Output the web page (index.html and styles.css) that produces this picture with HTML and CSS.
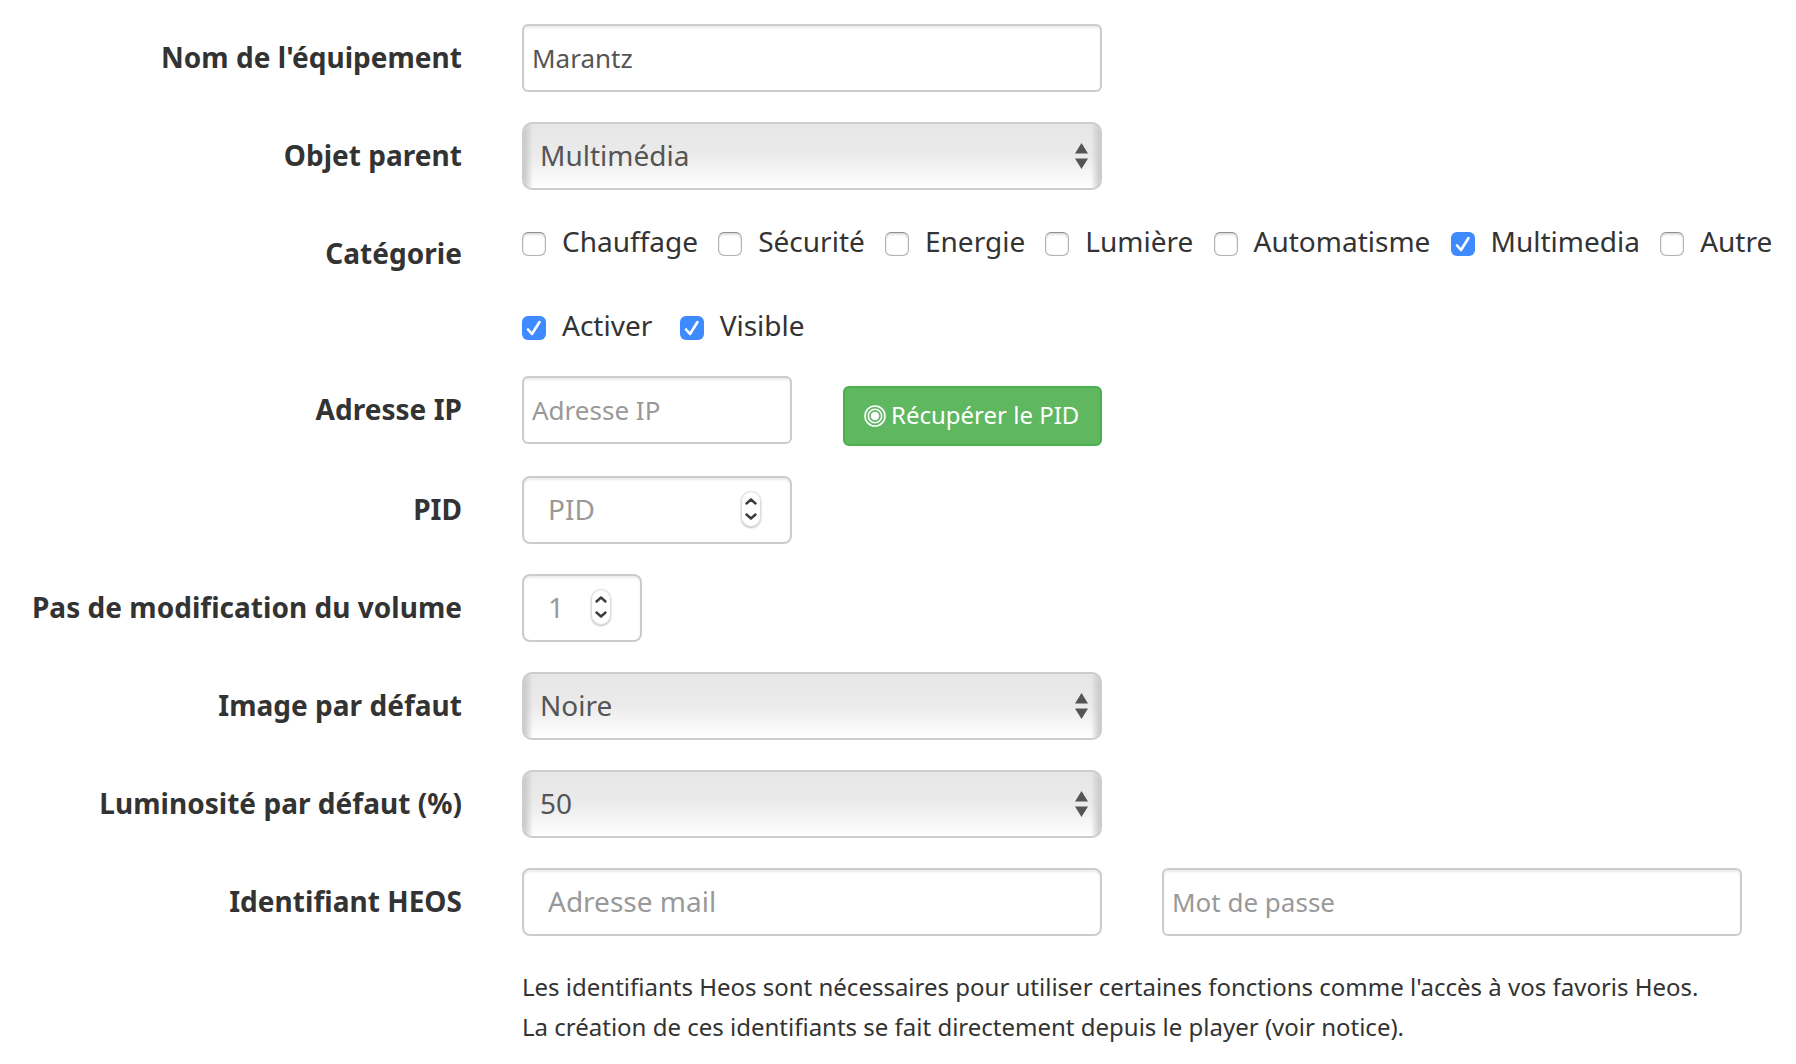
FILE: index.html
```html
<!DOCTYPE html>
<html lang="fr">
<head>
<meta charset="utf-8">
<title>Équipement</title>
<link rel="stylesheet" href="styles.css">
</head>
<body>
<form class="form">
  <div class="row">
    <label class="label">Nom de l'équipement</label>
    <input class="control wide compact" type="text" value="Marantz">
  </div>
  <div class="row">
    <label class="label">Objet parent</label>
    <div class="control wide select"><span>Multimédia</span><svg class="arrows" viewBox="0 0 13 26"><path d="M6.500 0l6.500 10.500H0zM0 15.500h13L6.500 26z"/></svg></div>
  </div>
  <div class="row row-checks">
    <span class="label">Catégorie</span>
    <div class="checks">
      <label class="check"><input type="checkbox">Chauffage</label>
      <label class="check"><input type="checkbox">Sécurité</label>
      <label class="check"><input type="checkbox">Energie</label>
      <label class="check"><input type="checkbox">Lumière</label>
      <label class="check"><input type="checkbox">Automatisme</label>
      <label class="check"><input type="checkbox" checked>Multimedia</label>
      <label class="check"><input type="checkbox">Autre</label>
    </div>
  </div>
  <div class="row row-status">
    <span class="label"></span>
    <div class="checks checks-loose">
      <label class="check"><input type="checkbox" checked>Activer</label>
      <label class="check"><input type="checkbox" checked>Visible</label>
    </div>
  </div>
  <div class="row row-ip">
    <label class="label">Adresse IP</label>
    <input class="control medium compact" type="text" placeholder="Adresse IP">
    <button class="button" type="button"><svg class="target" viewBox="0 0 22 22"><circle cx="11" cy="11" r="10"/><circle cx="11" cy="11" r="6.700"/><circle class="dot" cx="11" cy="11" r="4.200"/></svg><span>Récupérer le PID</span></button>
  </div>
  <div class="row">
    <label class="label">PID</label>
    <div class="control medium number"><span>PID</span><svg class="spinner" viewBox="0 0 20 36"><path d="M5.500 12.500l4.500-4 4.500 4M5.500 23.500l4.500 4 4.500-4"/></svg></div>
  </div>
  <div class="row">
    <label class="label">Pas de modification du volume</label>
    <div class="control small number"><span>1</span><svg class="spinner" viewBox="0 0 20 36"><path d="M5.500 12.500l4.500-4 4.500 4M5.500 23.500l4.500 4 4.500-4"/></svg></div>
  </div>
  <div class="row">
    <label class="label">Image par défaut</label>
    <div class="control wide select"><span>Noire</span><svg class="arrows" viewBox="0 0 13 26"><path d="M6.500 0l6.500 10.500H0zM0 15.500h13L6.500 26z"/></svg></div>
  </div>
  <div class="row">
    <label class="label">Luminosité par défaut (%)</label>
    <div class="control wide select"><span>50</span><svg class="arrows" viewBox="0 0 13 26"><path d="M6.500 0l6.500 10.500H0zM0 15.500h13L6.500 26z"/></svg></div>
  </div>
  <div class="row">
    <label class="label">Identifiant HEOS</label>
    <input class="control wide mail" type="text" placeholder="Adresse mail">
    <input class="control wide compact password" type="text" placeholder="Mot de passe">
  </div>
  <p class="help">Les identifiants Heos sont nécessaires pour utiliser certaines fonctions comme l'accès à vos favoris Heos.<br>La création de ces identifiants se fait directement depuis le player (voir notice).</p>
</form>
</body>
</html>
```

FILE: styles.css
```css
* { box-sizing: border-box; }

body {
  margin: 0;
  background: #fff;
  color: #333;
  font: 28px/40px "Noto Sans", sans-serif;
}

.form { padding-top: 24px; }

.row {
  display: flex;
  align-items: flex-start;
  height: 68px;
  margin-bottom: 30px;
}

.label {
  flex: none;
  width: 462px;
  margin-right: 60px;
  padding-top: 13px;
  font-weight: 700;
  letter-spacing: .03px;
  text-align: right;
  white-space: nowrap;
}

.control {
  flex: none;
  height: 68px;
  margin: 0;
  padding: 0 24px;
  border: 2px solid #ccc;
  border-radius: 8px;
  background: #fff;
  box-shadow: inset 0 2px 2px rgba(0, 0, 0, .075);
  color: #555;
  font: 28px/40px "Noto Sans", sans-serif;
}

.control::placeholder { color: #999; opacity: 1; }

.compact {
  padding: 0 8px;
  border-radius: 6px;
  font-size: 26px;
}

.wide { width: 580px; }
.medium { width: 270px; }
.small { width: 120px; }
.mail { padding-bottom: 2px; }

.select, .number { display: flex; align-items: center; }

.select {
  justify-content: space-between;
  padding: 0 12px 0 16px;
  border-radius: 10px;
  background:
    linear-gradient(to right, #c8c8c8, rgba(230, 230, 230, 0) 9px, rgba(230, 230, 230, 0) calc(100% - 9px), #c8c8c8),
    linear-gradient(#e6e6e6, #ebebeb 50%, #fff);
  box-shadow: inset 0 0 1px rgba(255, 255, 255, .9);
}

.select span, .number span { position: relative; top: -1px; }

.arrows { width: 13px; height: 26px; fill: #555; }

.number { justify-content: space-between; padding: 0 29px 2px 24px; color: #999; }
.number span { top: 0; }

.spinner {
  width: 20px;
  height: 36px;
  border-radius: 10px;
  background: #fff;
  box-shadow: inset 0 0 0 1px #ddd, 0 1px 2px rgba(0, 0, 0, .3);
  fill: none;
  stroke: #3c3c3c;
  stroke-width: 2.4;
  stroke-linecap: round;
  stroke-linejoin: round;
}

.row-checks { height: 68px; margin-bottom: 16px; }
.row-status { height: 56px; margin-bottom: 16px; }
.row-ip { margin-bottom: 32px; }

.checks { display: flex; gap: 20.2px; padding-top: 1px; }
.checks-loose { gap: 27.4px; }

.check {
  display: flex;
  gap: 16px;
  white-space: nowrap;
}

.check input {
  appearance: none;
  flex: none;
  width: 24px;
  height: 24px;
  margin: 11px 0 0;
  border: 1px solid #b4b4b4;
  border-top-color: #8f8f8f;
  border-radius: 6px;
  background: #fff;
  box-shadow: inset 0 2px 2px rgba(0, 0, 0, .12), inset 0 0 1px rgba(0, 0, 0, .3);
}

.check input:checked {
  border: 0;
  background: #3e8bff url("data:image/svg+xml,%3Csvg xmlns='http://www.w3.org/2000/svg' viewBox='0 0 24 24'%3E%3Cpath d='M6 13.500l4 4.500 7.500-12' fill='none' stroke='%23fff' stroke-width='2.600' stroke-linecap='round' stroke-linejoin='round'/%3E%3C/svg%3E");
  box-shadow: none;
}

.button {
  display: flex;
  align-items: center;
  gap: 5px;
  width: 259px;
  height: 60px;
  margin: 10px 0 0 51px;
  padding: 0 20px 0 19px;
  border: 2px solid #4cae4c;
  border-radius: 6px;
  background: #5fb760;
  color: #fff;
  font: 24px/36px "Noto Sans", sans-serif;
  white-space: nowrap;
}

.button { justify-content: flex-start; }
.button span { position: relative; top: -1px; }

.target { flex: none; width: 22px; height: 22px; fill: none; stroke: #fff; stroke-width: 1.6; }
.target .dot { fill: #fff; stroke: none; }

.password { margin-left: 60px; }

.help {
  margin: 31px 0 0 522px;
  font-size: 24px;
  white-space: nowrap;
}
```
